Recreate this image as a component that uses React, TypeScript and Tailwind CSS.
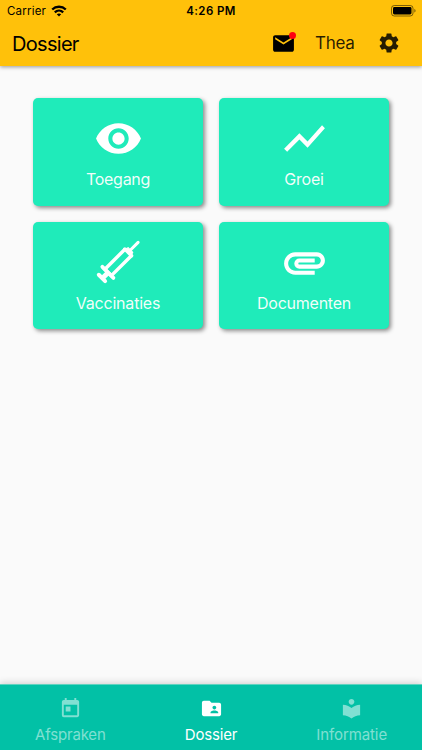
import React from 'react';
import {
  MdAttachment,
  MdFolderShared,
  MdLocalLibrary,
  MdMail,
  MdRemoveRedEye,
  MdSettings,
  MdShowChart,
  MdToday,
} from 'react-icons/md';

const SyringeIcon: React.FC = () => (
  <svg viewBox="0 0 48 48" className="w-[49px] h-[49px]" fill="none" stroke="currentColor" strokeLinecap="round">
    <path d="M43.2 4.3L35 12.5" strokeWidth="3" />
    <path d="M33.5 9.5L38 14L36.5 17L30.5 11Z" fill="currentColor" strokeWidth="1" />
    <path d="M30.2 10.8L36.8 17.4" strokeWidth="3.4" />
    <path d="M29.8 11.5L10.7 30.6L17 36.9L36.1 17.8" strokeWidth="3.4" />
    <path d="M8.2 28.3L19 39.1" strokeWidth="3.8" />
    <path d="M13.2 34.5L8.2 39.5" strokeWidth="4.8" strokeLinecap="butt" />
    <path d="M4.7 36L10.9 42.2" strokeWidth="3.9" />
  </svg>
);

const WifiIcon: React.FC = () => (
  <svg viewBox="0 0 16 12" className="w-4 h-3" fill="none" stroke="currentColor" strokeWidth="2.3">
    <path d="M1.2 4.5C5 .8 11 .8 14.8 4.5" />
    <path d="M3.8 7.3C6.2 5 9.8 5 12.2 7.3" />
    <path d="M8 11.4L5.8 9.2C7 8.1 9 8.1 10.2 9.2Z" fill="currentColor" stroke="none" />
  </svg>
);

const BatteryIcon: React.FC = () => (
  <svg viewBox="0 0 25 12" className="w-[25px] h-3" fill="none">
    <rect x=".5" y=".5" width="21.5" height="10.5" rx="2.8" stroke="#000" strokeOpacity=".5" />
    <rect x="2" y="2" width="18.5" height="7.5" rx="1.4" fill="#000" />
    <path d="M23.3 4v3.6c.9-.3 1.3-1 1.3-1.8s-.4-1.5-1.3-1.8z" fill="#000" fillOpacity=".5" />
  </svg>
);

interface CardProps {
  label: string;
  textClass: string;
  children: React.ReactNode;
}

const Card: React.FC<CardProps> = ({ label, textClass, children }) => (
  <button className="flex flex-col items-center h-[107.5px] pt-4 rounded-[5px] bg-[#1febba] text-white shadow-[2px_2px_4px_rgba(0,0,0,0.45)]">
    <span className="flex h-[49px]">{children}</span>
    <span className={`mt-1 text-[16px] leading-6 whitespace-nowrap text-white/95 ${textClass}`}>{label}</span>
  </button>
);

interface TabProps {
  label: string;
  textClass: string;
  children: React.ReactNode;
}

const Tab: React.FC<TabProps> = ({ label, textClass, children }) => (
  <button className={`flex flex-1 flex-col items-center pt-[11.5px] text-[15px] leading-5 whitespace-nowrap ${textClass}`}>
    {children}
    <span className="mt-[5.5px]">{label}</span>
  </button>
);

const App: React.FC = () => {
  return (
    <div className="flex flex-col w-full h-[750px] overflow-hidden bg-[#fafafa] font-['Inter',sans-serif]">
      <header className="h-[66px] shrink-0 bg-[#ffc10a] text-black shadow-[0_1px_4px_rgba(0,0,0,0.4)]">
        <div className="grid grid-cols-3 items-center h-[22px] pl-[7px] pr-[6px] text-[11.5px]">
          <div className="flex items-center gap-[5px]">
            <span className="pt-px tracking-[0.2px]">Carrier</span>
            <WifiIcon />
          </div>
          <span className="pt-px pr-px text-center font-semibold tracking-[0.4px]">4:26 PM</span>
          <div className="flex justify-end">
            <BatteryIcon />
          </div>
        </div>
        <div className="flex items-center h-[42px] pl-[12px] pr-[21px]">
          <h1 className="flex-1 pt-px text-[20px] leading-6 tracking-[-0.7px]">Dossier</h1>
          <div className="relative">
            <MdMail size={25} />
            <span className="absolute top-[1px] right-0 size-[7px] rounded-full bg-[#ff0010]" />
          </div>
          <span className="ml-[19px] pt-[2px] text-[17px] text-black/85 tracking-[-0.3px]">Thea</span>
          <MdSettings size={24} className="ml-[22.5px] text-black/85" />
        </div>
      </header>

      <main className="flex-1 px-[33px] pt-8">
        <div className="grid grid-cols-[170px_170px] gap-4">
          <Card label="Toegang" textClass="tracking-[-0.3px]">
            <MdRemoveRedEye size={49} />
          </Card>
          <Card label="Groei" textClass="tracking-[-0.2px]">
            <MdShowChart size={49} />
          </Card>
          <Card label="Vaccinaties" textClass="tracking-[-0.2px]">
            <SyringeIcon />
          </Card>
          <Card label="Documenten" textClass="tracking-[-0.25px]">
            <MdAttachment size={49} />
          </Card>
        </div>
      </main>

      <nav className="flex h-[66px] shrink-0 border-t border-[#60d3c0] bg-[#02c1a6] shadow-[0_-1px_7px_rgba(0,0,0,0.18)]">
        <Tab label="Afspraken" textClass="text-white/50 tracking-[-0.2px]">
          <MdToday size={23} />
        </Tab>
        <Tab label="Dossier" textClass="text-white tracking-[-0.2px]">
          <MdFolderShared size={23} />
        </Tab>
        <Tab label="Informatie" textClass="text-white/50 tracking-[-0.1px]">
          <MdLocalLibrary size={23} />
        </Tab>
      </nav>
    </div>
  );
};

export default App;
